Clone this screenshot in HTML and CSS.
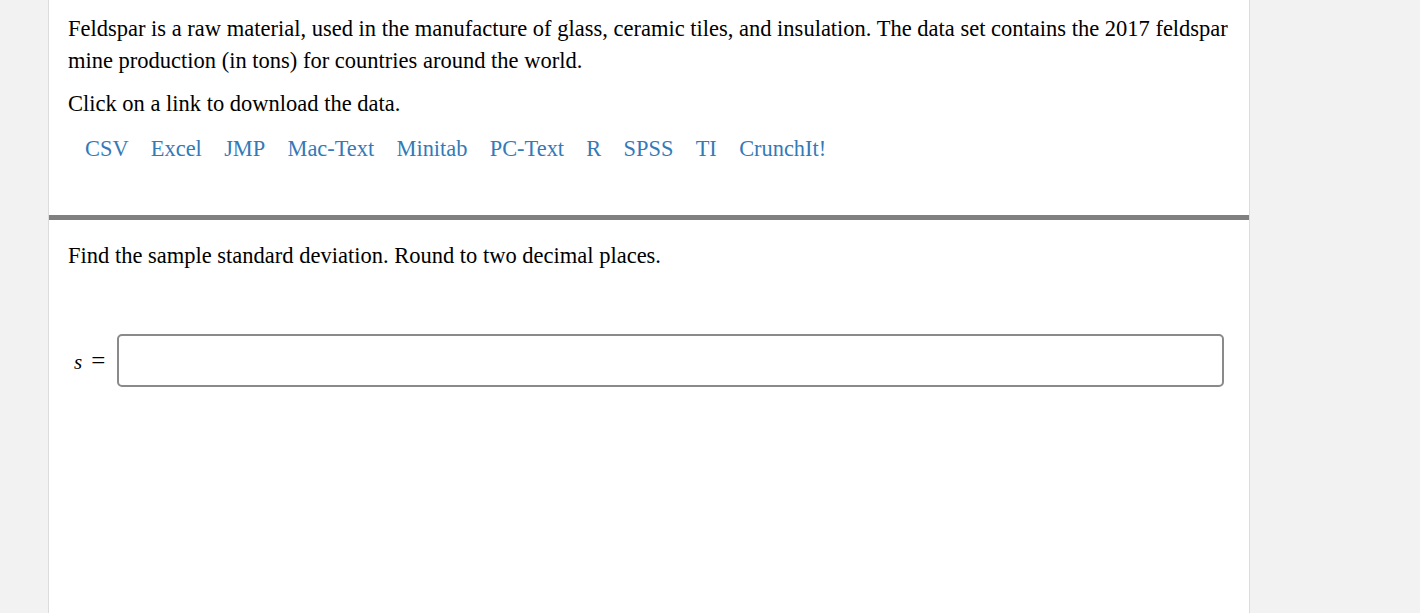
FILE: index.html
```html
<!DOCTYPE html>
<html>
<head>
<meta charset="utf-8">
<link rel="stylesheet" href="styles.css">
</head>
<body>
<div class="panel">
  <section class="intro">
    <p class="para">Feldspar is a raw material, used in the manufacture of glass, ceramic tiles, and insulation. The data set contains the 2017 feldspar mine production (in tons) for countries around the world.</p>
    <p class="para">Click on a link to download the data.</p>
    <div class="links">
      <a href="#">CSV</a><a href="#">Excel</a><a href="#">JMP</a><a href="#">Mac-Text</a><a href="#">Minitab</a><a href="#">PC-Text</a><a href="#">R</a><a href="#">SPSS</a><a href="#">TI</a><a href="#">CrunchIt!</a>
    </div>
  </section>
  <div class="divider"></div>
  <section class="question">
    <p class="para">Find the sample standard deviation. Round to two decimal places.</p>
    <div class="answer">
      <span class="math"><i class="var">s</i><span class="eq">=</span></span>
      <input class="field" type="text">
    </div>
  </section>
</div>
</body>
</html>
```
FILE: styles.css
```css
html, body {
  margin: 0;
  padding: 0;
  background: #f2f2f2;
  height: 100%;
}
body {
  font-family: "Liberation Serif", "Times New Roman", serif;
  color: #000;
}
.panel {
  margin-left: 48px;
  width: 1200px;
  min-height: 100%;
  background: #fff;
  border-left: 1px solid #dcdcdc;
  border-right: 1px solid #dcdcdc;
}
.intro {
  padding: 13px 20px 0 19px;
  height: 215px;
  box-sizing: border-box;
}
.para {
  margin: 0 0 11px;
  font-size: 22.5px;
  line-height: 32px;
}
.links {
  display: flex;
  gap: 22.3px;
  padding-left: 17px;
  margin-top: 13px;
  font-size: 22.4px;
  line-height: 32px;
}
.links a {
  color: #337ab7;
  text-decoration: none;
}
.divider {
  height: 5px;
  background: #808080;
}
.question {
  padding: 20px 25px 0 19px;
}
.answer {
  display: flex;
  align-items: center;
  margin-top: 62px;
}
.math {
  width: 49px;
  padding-left: 6px;
  box-sizing: border-box;
  display: flex;
  align-items: baseline;
  gap: 9px;
}
.var {
  font-style: italic;
  font-size: 21px;
}
.eq {
  font-size: 25px;
}
.field {
  flex: 1;
  height: 53px;
  box-sizing: border-box;
  border: 2px solid #8a8a8a;
  border-radius: 5px;
  background: #fff;
  font-size: 18px;
}
```
